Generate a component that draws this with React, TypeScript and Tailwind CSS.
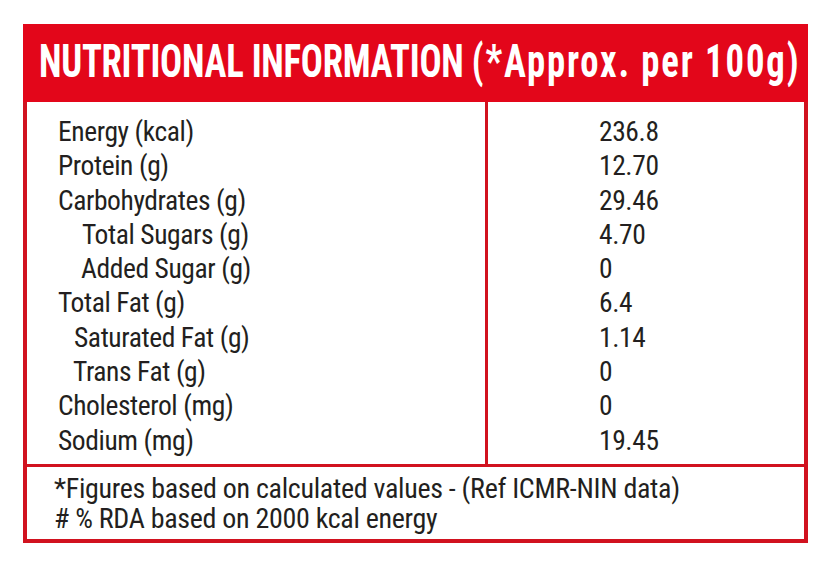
const rows: { label: string; value: string; indent: string }[] = [
  { label: 'Energy (kcal)', value: '236.8', indent: 'pl-0' },
  { label: 'Protein (g)', value: '12.70', indent: 'pl-0' },
  { label: 'Carbohydrates (g)', value: '29.46', indent: 'pl-0' },
  { label: 'Total Sugars (g)', value: '4.70', indent: 'pl-[24px]' },
  { label: 'Added Sugar (g)', value: '0', indent: 'pl-[23px]' },
  { label: 'Total Fat (g)', value: '6.4', indent: 'pl-0' },
  { label: 'Saturated Fat (g)', value: '1.14', indent: 'pl-[16px]' },
  { label: 'Trans Fat (g)', value: '0', indent: 'pl-[15px]' },
  { label: 'Cholesterol (mg)', value: '0', indent: 'pl-0' },
  { label: 'Sodium (mg)', value: '19.45', indent: 'pl-0' },
];

export default function App() {
  return (
    <div className="w-[835px] h-[564px] bg-white pt-[24px] pl-[23px] font-['Roboto_Condensed',sans-serif] text-[#231f20]">
      <div className="w-[785px] flex flex-col">
        <div className="h-[78px] bg-[#e3061a] flex items-center pl-[16px] pb-[6px] overflow-hidden">
          <h1 className="text-white font-bold text-[47px] leading-none whitespace-nowrap origin-left scale-x-[0.78] tracking-[-0.3px]">
            NUTRITIONAL INFORMATION <span className="tracking-[2.4px]">(*Approx. per 100g)</span>
          </h1>
        </div>
        <div className="border-x-4 border-[#d1121f] grid grid-cols-[461px_1fr] h-[362px]">
          <div className="border-r-[3px] border-[#d1121f] pl-[31px] pt-[13px] text-[27.5px] leading-[34.3px] tracking-[-0.4px]">
            {rows.map((r) => (
              <div key={r.label} className={r.indent}>
                {r.label}
              </div>
            ))}
          </div>
          <div className="pl-[111px] pt-[13px] text-[27.5px] leading-[34.3px] tracking-[-0.4px]">
            {rows.map((r) => (
              <div key={r.label}>{r.value}</div>
            ))}
          </div>
        </div>
        <div className="border-4 border-[#d1121f] border-t-[3px] h-[79px] pl-[27px] pt-[7px] text-[28px] leading-[30px] tracking-[-0.3px]">
          <div>*Figures based on calculated values - (Ref ICMR-NIN data)</div>
          <div># % RDA based on 2000 kcal energy</div>
        </div>
      </div>
    </div>
  );
}
